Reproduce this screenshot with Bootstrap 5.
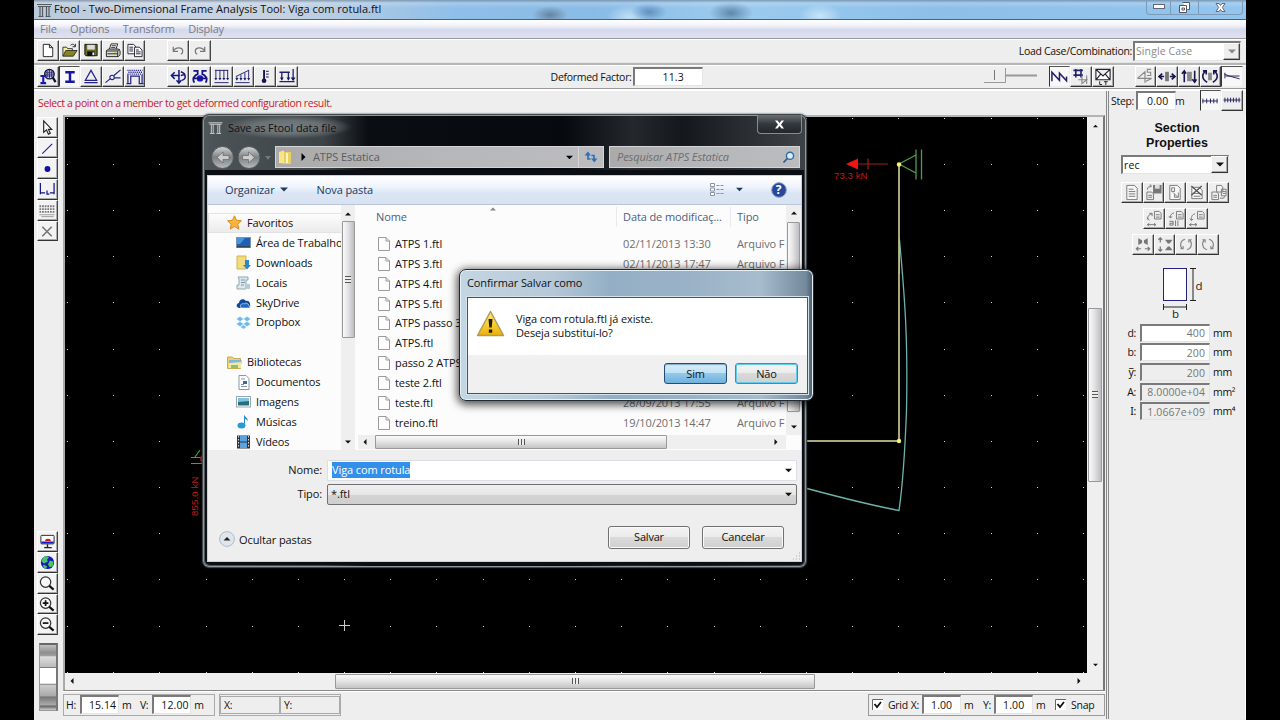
<!DOCTYPE html>
<html lang="pt-BR">
<head>
<meta charset="utf-8">
<meta name="viewport" content="width=device-width, initial-scale=1">
<title>Ftool - Two-Dimensional Frame Analysis Tool: Viga com rotula.ftl</title>
<link rel="stylesheet" href="https://cdn.jsdelivr.net/npm/bootstrap@5.3.0/dist/css/bootstrap.min.css">
<style>
*{box-sizing:border-box}
html,body{height:720px;overflow:hidden}
body{background:#000;font-family:"Open Sans","Noto Sans",sans-serif;font-size:11px;line-height:14px;color:#111}
svg{display:block;flex:none}
.app{width:1212px;height:720px;margin:0 34px;background:#eee;font-size:10.5px;letter-spacing:-.3px;white-space:nowrap}
.segoe{font-size:11px;letter-spacing:-.1px;white-space:nowrap}
.titlebar{height:19px;background:linear-gradient(90deg,#b9c9dc 0,#c9d3e2 130px,#c5d2e2 250px,#a5c6e6 350px,#8fbfe8 420px,#8abbe6 560px,#9ccbef 700px,#8dbfe9 900px,#93c5ee 1212px);padding-left:3px;position:relative}
.titlebar:after{content:"";position:absolute;inset:0;background:linear-gradient(#6c8296aa 0,#fff3 3px,#fff0 8px,#fff0 100%),radial-gradient(ellipse 18px 9px at 516px 15px,#5a6e82bb,#0000),radial-gradient(ellipse 18px 9px at 615px 12px,#4d7fb2bb,#0000),radial-gradient(ellipse 22px 12px at 697px 13px,#50789acc,#0000),radial-gradient(ellipse 22px 12px at 595px 17px,#d8effcaa,#0000),radial-gradient(ellipse 22px 12px at 786px 16px,#d8effcbb,#0000)}
.titlebar>*{z-index:1;position:relative}
.ttl{line-height:18px;margin-left:2px;letter-spacing:0}
.winbtns{width:97px;height:15px;border:1px solid #7c9bb8;border-top:0;border-radius:0 0 4px 4px;margin-right:3px}
.winbtns>div{border-right:1px solid #7c9bb8;display:flex;align-items:center;justify-content:center}
.winbtns>.wmin{width:24px}.winbtns>.wmax{width:28px}
.menubar{height:19px;border-top:1px solid #55606e;background:linear-gradient(#fff 0,#f2f3fa 30%,#d5d9ec 55%,#dfe2f2 100%);color:#7b7b82;font-size:11px;letter-spacing:-.2px;padding-left:6px;gap:13.5px}
.sunk-line{height:3px;background:linear-gradient(#9a9a9a 0 1px,#fff 1px 2px,#fff 2px)}
.sunk-line.thin{height:2px}
.groove{height:4px;background:linear-gradient(#e4e4e4 0 1px,#b5b5b5 1px 3px,#fdfdfd 3px)}
.tb{height:22px;padding-left:3px}
.tbn{width:21.7px;height:21px;background:#eee;border:1px solid;border-color:#fff #444 #333 #fff;box-shadow:inset -1px -1px #aaa;display:flex;align-items:center;justify-content:center;flex:none}
.tbn.on{background:#f8f8f8;border-color:#555 #eee #eee #333;box-shadow:none}
.fld{background:#fff;border:1px solid #e4e4e4;border-top:2px solid #7a7a7a;border-left:2px solid #7a7a7a;display:flex;align-items:center;flex:none;letter-spacing:.1px}
.fld.gray{background:#eee;color:#808080}
.undo-group{margin-left:22px}
.loadcase .case{width:108px;height:20px;margin:0 5px 0 1px;color:#8a8a8a;padding-left:1px}
.drop{width:17px;height:17px;color:#888}
.rec .drop{color:#111}
.factor{margin-left:253px}
.factor .fld{width:70px;height:19px;margin-left:1px;padding-left:28px}
.slide{margin-right:11px}
.grp2{margin-left:21px;margin-right:3px}
.statusline{height:24px}
.stepbox{width:140px;border-left:3px double #888;height:24px;padding:0 0 4px 2px}
.stepf{width:40px;height:19px;padding-left:9px;margin-left:2px}
.stepu{margin-left:-1px}
.stb{margin-right:3px}
.redmsg{color:#cb1a2c;padding-left:4px;letter-spacing:-.38px}
.mainrow{height:606px}
.lefttools{width:29px;padding:2px 0 0 3px;background:#eee;height:603px}
.lefttools .tbn{height:20.75px;width:20.6px;background:#f3f3f3}
.gap-tools{height:290px}
.wheel{width:19px;height:68px;margin:8px 0 0 2px;border:1px solid #999;border-right:2px solid #777;border-top:2px solid #666;background:linear-gradient(#c0c0c0 0,#8e8e8e 12%,#a0a0a0 17%,#ddd 18%,#bbb 34%,#555 35%,#fff 36%,#fff 59%,#777 60%,#ccc 62%,#aaa 78%,#777 80%,#aaa 92%,#666 94%,#ccc)}
.centre{width:1042px;border-left:2px solid #aaa;border-right:2px solid #777;border-bottom:2px solid #888;height:576px;border-top:2px solid #b4b4b4}
.vsb{width:16px;background:#efefef;position:relative}
.hsb{height:17px;background:#efefef}
.thumb-v{background:linear-gradient(90deg,#fafafa,#e3e3e6 45%,#bdbdc2);border:1px solid #999;border-radius:1px;display:flex;align-items:center;justify-content:center}
.thumb-h{background:linear-gradient(#fafafa,#e6e6e6 45%,#c4c4c8);border:1px solid #999;border-radius:1px;display:flex;align-items:center;justify-content:center}
.grip{width:7px;height:6px;background:repeating-linear-gradient(90deg,#555 0 1px,#eee 1px 3px)}
.grip.v{width:6px;height:7px;background:repeating-linear-gradient(#555 0 1px,#eee 1px 3px)}
.main-vsb{padding:7px 0 6px}
.main-vsb .thumb-v{width:14px;height:174px;margin-top:180px}
.main-hsb{padding:0 22px 0 5px}
.main-hsb .thumb-h{width:480px;height:15px;margin-left:261px}
.bottombar{height:26px;border-top:1px solid #fff;padding-top:1px}
.box{border:1px solid #aaa;height:22px;display:flex;align-items:center}
.bottombar .fld{width:39px;height:19px;padding-left:7px;margin-left:4px}
.bottombar .u{width:18px;padding-left:3px}
.bottombar .v{margin-left:3px}
.b1{padding-left:2px;width:152px}
.b2{width:122px;margin-left:4px}
.b2 span{border:1px solid #aaa;height:18px;width:61px;padding:1px 3px}
.b3{padding-left:3px;width:237px;border-color:#999}
.b3 .gl{margin-left:5px}.b3 .gx{margin-left:3px}.c2{margin-left:4px}
.bottombar .b3 .fld{margin-left:3px}
.bottombar .b3 .v{margin-left:4px}
.props{width:140px;border-left:3px double #888;border-right:1px solid #fff;height:604px;margin-left:auto}
.props h2{font:bold 12.5px/15px "Liberation Sans",Arial,sans-serif;text-align:center;margin:6px 0 4px;letter-spacing:0;color:#111}
.rec{width:108px;height:19px;margin-left:12px;padding-left:1px}
.r1{margin:8px 0 5px 12px}.r2{margin:0 0 5px 34px}.r3{margin:0 0 12px 23px}
.secfig{margin:0 0 2px 53px}
.prow{height:19.7px}
.prow .lb{width:31px;text-align:right;padding-right:4px}
.prow .fld{width:70px;height:18px;justify-content:end;padding-right:4px;color:#777}
.prow .u{margin-left:3px}
.barred{font-family:"Noto Sans",sans-serif}
/* save dialog */
.savedlg{position:absolute;left:202px;top:114px;width:605px;height:454px;border-radius:7px;border:1px solid #3f474b;background:linear-gradient(90deg,#50585c 0,#4a5256 16px,#3d4447 120px,#0a0d12 165px,#06090e 360px,#24282d 430px,#14181d 480px,#3d4247 600px);padding:0 4px 5px;box-shadow:inset 0 0 0 1px #8d979c,0 0 2px #222}
.shade{position:absolute;inset:55px 2px 2px 2px;background:#0b0f13;border-radius:0 0 5px 5px}
.dlgtitle{height:31px}
.dl{margin:7px 0 0 1px}
.glow{background:radial-gradient(closest-side,#777d80 0,#6a7073 55%,#0000)}
.dt{height:24px;line-height:25px;padding:0 16px 0 5px}
.dlgclose{width:45px;height:19px;margin-right:0;border:1px solid #878c91;border-top:0;border-radius:0 0 4px 4px;background:linear-gradient(#6a6f74,#33383d 50%,#23272b);display:flex;align-items:center;justify-content:center}
.navrow{margin-left:2px;height:29px}
.addr{height:22px;border:1px solid #d5d5d7;background:linear-gradient(90deg,#aaa 0,#b6b7b9 50%,#bcbcbf);color:#5b5d61}
.a1{width:329px;padding-left:2px}
.crumb{margin:0 7px 0 9px}
.refr{width:25px;height:20px;border-left:1px solid #d5d5d7;margin-left:5px;display:flex;align-items:center;justify-content:center}
.a2{width:191px;margin-left:5px;padding:0 4px 0 7px;color:#6c6d72}
.client{position:relative;height:387px;border:1px solid #c9d2da;background:#eee}
.cmdbar{height:29px;background:linear-gradient(#fff,#eef3fc 40%,#dbe6f5 60%,#d8e2f2);border-bottom:1px solid #bac5d6;color:#1e395b;padding-bottom:1px}
.c1{margin-left:17px}.c1a{margin-left:5px}.c3{margin-left:29px}.c4{margin-left:11px}.c5{margin:0 14px 0 28px}
.panes{height:245px;background:#fcfcfd}
.navp{width:135px;overflow:hidden;padding-top:8px}
.navp>div{height:19.9px;display:flex;align-items:center;gap:5px;padding-left:28px}
.navp>.top{padding-left:19px;gap:5px}
.navp>.hl{background:linear-gradient(#fdfdfd,#ebebec);border:1px solid #e3e3e4;margin-right:-1px;padding-left:18px}
.nv{width:14px;padding:7px 0 6px}
.nv .thumb-v{width:13px;height:117px;margin-top:5px}
.flist{width:446px;padding-left:3px}
.rows{width:428px;height:230px;padding-left:20px}
.rows .hdr{margin:2px 0 7px;position:relative}
.frow{height:19.9px;display:flex;align-items:center}
.frow>.n{width:245px;display:flex;align-items:center;gap:5px;overflow:hidden}
.frow>.d{width:114px;color:#6e6e6e}
.frow>.t{color:#6e6e6e;width:49px;overflow:hidden}
.hdr{color:#4c607a}
.h1x{width:245px;margin:0 2px 0 -2px;height:20px;line-height:20px}
.h2x,.h3x{height:20px;line-height:20px;margin-left:-7px;padding-left:6px;border-left:1px solid #e8eaee}
.h2x{width:121px}.h3x{width:49px}
.sortm{position:absolute;left:112px;top:0;color:#888}
.fv{width:15px;height:230px;padding:6px 0 6px}
.fv .thumb-v{width:13px;height:190px;margin-top:7px}
.fh{height:14px;width:428px;padding:0 8px 0 5px}
.fh .thumb-h{width:292px;height:14px;margin-left:8px}
.form-area{padding-top:8px;color:#111}
.fr{height:24px}
.fl{width:119px;text-align:right;padding-right:5px}
.inp{width:470px;height:21px;background:#fff;padding:0 4px;border:1px solid #dcdfe3}
.cmb{background:linear-gradient(#f0f0f0,#e6e6e6 50%,#d4d4d4 50%,#cfcfcf);border:1px solid #707070;border-radius:2px;padding-left:3px}
.sel{background:#3390ea;color:#fff;padding:1px 0}
.acts{margin-top:20px;padding:0 17px 0 11px;height:26px}
.acts .w7btn{width:82px;margin-top:-4px}.acts .canc{margin-left:12px}
.oc{margin-top:1px}
.w7btn{height:23px;border:1px solid #707070;border-radius:3px;background:linear-gradient(#f3f3f3,#ebebeb 50%,#dadada 50%,#d0d0d0);box-shadow:inset 0 0 0 1px #fafafa;display:flex;align-items:center;justify-content:center;letter-spacing:-.2px}
/* confirmation */
.confirm{position:absolute;left:459px;top:269px;width:355px;height:132px;border-radius:7px;border:1px solid #222b33;background:linear-gradient(90deg,#c4d6e2 0,#b7c9d8 90px,#94afc5 150px,#9ab2c7 230px,#a7bccd 300px,#74899c 346px,#4c5b68 353px);box-shadow:inset 0 0 0 1px #e4f1f7,0 2px 9px 2px #000a;padding:0 7px}
.confirm .hd{height:27px;line-height:26px}
.confirm .bd{width:341px;height:97px;border:1px solid #40566b;box-shadow:0 0 0 1px #d3e3ec;background:#f0f0f0}
.confirm .msg{height:57px;background:#fff;padding:9px 0 0 7px;letter-spacing:-.12px}
.msg svg{margin:3px 11px 0 1px}
.mt{padding-top:5px}
.cb{padding:8px 9px 0;gap:8px}
.confirm .w7btn{height:21px}
.confirm .sim{width:63px;border-color:#244f72;background:linear-gradient(#d7edf9,#bfe1f5 50%,#94c8ea 50%,#6fb1de);box-shadow:inset 0 1px 1px #7fa9c4}
.confirm .nao{width:63px;border-color:#2f92b8;box-shadow:inset 0 0 0 1px #62cdf0}
</style>
</head>
<body>
<svg width="0" height="0" class="position-absolute">
<defs>
<symbol id="logo" viewBox="0 0 15 14"><path d="M0 .5h15M1 2.500h13M3 3v9.500M5.500 3v9.500M9.500 3v9.500M12 3v9.500M1.500 12.500h5M8.500 12.500h5" fill="none" stroke="#555a60" stroke-width="1.200"/></symbol>
<symbol id="logow" viewBox="0 0 15 14"><path d="M0 .7h15M1 2.500h13M3 3v9.500M5 3v9.500M10 3v9.500M12 3v9.500M1.500 12.500h5M8.500 12.500h5" fill="none" stroke="#c5c5c0" stroke-width="1.100"/></symbol>
<symbol id="new" viewBox="0 0 18 18"><path d="M4 2.500h6.500l3.500 3.500v9.500H4zM10.500 2.500V6H14" fill="#fff" stroke="#222"/></symbol>
<symbol id="open" viewBox="0 0 18 18"><path d="M1.500 15V5.500h4l1 1.500h5v2" fill="#f5f0a0" stroke="#333"/><path d="M1.500 15l3-6h12l-4 6z" fill="#8a8420" stroke="#332"/><path d="M9.500 3.500c2-2 4-1 5 1M14.700 2v3h-3" fill="none" stroke="#222"/></symbol>
<symbol id="save" viewBox="0 0 18 18"><path d="M2.500 2.500h13v12h-12l-1-1z" fill="#6d6d22" stroke="#111"/><path d="M5 3h8v5H5z" fill="#ddd"/><path d="M5 10h8v5H5z" fill="#111"/><path d="M10.500 11h2v3h-2z" fill="#eee"/></symbol>
<symbol id="print" viewBox="0 0 18 18"><path d="M5 8l2-6h7l-2 6M7.500 4h4.500M7 6h4.500" fill="#fff" stroke="#222"/><path d="M2 9.500L4 7.500h11l1.500 2v4l-2 2H2zM2 9.500h12v6M14 9.500l2-2M3 12.500h11" fill="#ddd" stroke="#222"/><path d="M10 11h2" stroke="#cc0"/></symbol>
<symbol id="copy" viewBox="0 0 18 18"><path d="M1.500 2.500h6l2 2v8h-8z" fill="#fff" stroke="#223"/><path d="M3 5.500h4M3 7.500h4M3 9.500h4" stroke="#223"/><path d="M8.500 5.500h5l3 3v7h-8z" fill="#fff" stroke="#223"/><path d="M10 8.500h3M10 10.500h5M10 12.500h5" stroke="#223"/></symbol>
<symbol id="undo" viewBox="0 0 18 18"><path d="M4 5v5h5M4 10c2-5 10-5 10 0 0 1.500-1 2.500-2 3" fill="none" stroke="#777" stroke-width="1.300"/></symbol>
<symbol id="redo" viewBox="0 0 18 18"><path d="M14 5v5H9M14 10c-2-5-10-5-10 0 0 1.500 1 2.500 2 3" fill="none" stroke="#777" stroke-width="1.300"/></symbol>
<symbol id="mat" viewBox="0 0 18 18"><circle cx="10.500" cy="6.500" r="5" fill="#dde" stroke="#113" stroke-width="1.500"/><path d="M10.500 2v9M6 6.500h9M8 3v7M13 3v7M7 4.500h7M7 8.500h7" stroke="#22227a"/><path d="M14 10l3 5" stroke="#113" stroke-width="2.400"/><path d="M1 8.500h6M4 8v8M1 16h6" stroke="#1a1ab0" stroke-width="2.200"/></symbol>
<symbol id="sec" viewBox="0 0 18 18"><path d="M4 4.500h10M4 14.500h10M9 4v10" stroke="#1616a6" stroke-width="2.600"/></symbol>
<symbol id="sup" viewBox="0 0 18 18"><path d="M9 2.500L3 13h12zM2 15.500h14" fill="none" stroke="#22228a" stroke-width="1.300"/></symbol>
<symbol id="rot" viewBox="0 0 18 18"><path d="M1 15.500l5-4M10 8l7-6M10 10.500h7" stroke="#22228a" stroke-width="1.300"/><circle cx="8" cy="10" r="2.300" fill="#eef" stroke="#22228a" stroke-width="1.200"/></symbol>
<symbol id="mem" viewBox="0 0 18 18"><path d="M1.500 17V7M4.500 17V8.500h9V17M16.500 17V7M0 16.500h5M13 16.500h5" fill="none" stroke="#22228a" stroke-width="1.300"/><path d="M1 2.500h16M2 4.500h15M1 6.500h16" stroke="#22228a" stroke-width="1.500" stroke-dasharray="1.200 1"/></symbol>
<symbol id="nod" viewBox="0 0 18 18"><path d="M10 2v14M7.500 13l2.500 3 2.500-3M2 8h9M5.500 4.500L2 8l3.500 3.500M12 4c6 2 6 8 1 9M12 8l4-1" fill="none" stroke="#15157c" stroke-width="1.600"/></symbol>
<symbol id="mom" viewBox="0 0 18 18"><circle cx="9" cy="11" r="3.400" fill="#1515d0"/><path d="M1 11h16M3 15.500c-3-5 1-8 4-9.500M2 3h4.500v4.500M15 15.500c3-5-1-8-4-9.500M16 3h-4.500v4.500" fill="none" stroke="#15157c" stroke-width="1.900"/></symbol>
<symbol id="uni" viewBox="0 0 18 18"><path d="M1.500 2.500h14M2.500 2v10M6.800 2v10M11 2v10M15 2v10M1 15.500h15" stroke="#22226c"/><path d="M.8 10.500l1.700 2.500 1.700-2.500zM5.100 10.500l1.700 2.500 1.700-2.500zM9.300 10.500l1.700 2.500 1.700-2.500zM13.300 10.500l1.700 2.500 1.700-2.500z" fill="#22226c"/></symbol>
<symbol id="lin" viewBox="0 0 18 18"><path d="M1.500 9L15 2.500M2.500 9v4M6.800 7v6M11 5v8M15 2v11M1 15.500h15" stroke="#22226c"/><path d="M.8 10.500l1.700 2.500 1.700-2.500zM5.100 10.500l1.700 2.500 1.700-2.500zM9.300 10.500l1.700 2.500 1.700-2.500zM13.300 10.500l1.700 2.500 1.700-2.500z" fill="#22226c"/></symbol>
<symbol id="tmp" viewBox="0 0 18 18"><path d="M8 2v11" stroke="#15154c" stroke-width="2"/><circle cx="8" cy="13.500" r="2.500" fill="#15154c"/><path d="M10 3.500h3M10 6.500h3M10 9.500h3" stroke="#15154c"/></symbol>
<symbol id="trn" viewBox="0 0 18 18"><path d="M1 4.500h11M3.500 4v9M10.500 4v9M15.500 1v11M1 14.500h16" stroke="#22226c" stroke-width="1.400" fill="none"/><path d="M13 10l2.500 4L18 10zM1.500 10h4l-2 3zM8.500 10h4l-2 3z" fill="#15155c"/></symbol>
<symbol id="zig" viewBox="0 0 18 18"><path d="M1.500 14V4.500l8 8.500V5.500l7.500 8V9" fill="none" stroke="#22226c" stroke-width="1.600"/></symbol>
<symbol id="hdf" viewBox="0 0 18 18"><path d="M1 2.500h10M1 7.500h10M3.500 1v9M9 1v9" stroke="#22226c" stroke-width="1.700"/><path d="M6 12.500h9l-5 4V8M15 8v9" fill="none" stroke="#888" stroke-width="1.200"/></symbol>
<symbol id="mail" viewBox="0 0 18 18"><path d="M1.500 1.500h15v11h-15zM1.500 1.500L9 8.500l7.500-7M1.500 12.500l5-6M16.500 12.500l-5-6" fill="#fff" stroke="#223" stroke-width="1.200"/><path d="M5.500 14v3.500H8M10 14.500h4M12 14v4" fill="none" stroke="#222"/></symbol>
<symbol id="gs" viewBox="0 0 18 18"><path d="M1 11h15M1 11l8-7v12M10 14l6-3M15.500 1.500h-4v3h3.500V8h-4" fill="none" stroke="#888" stroke-width="1.200"/></symbol>
<symbol id="axial" viewBox="0 0 18 18"><path d="M7 4h4v10H7z" fill="#777"/><path d="M0 9h6M12 9h6M4 6L.500 9 4 12M14 6l3.500 3L14 12" fill="none" stroke="#15154c" stroke-width="1.800"/></symbol>
<symbol id="shear" viewBox="0 0 18 18"><path d="M7 4h5v10H7z" fill="#888"/><path d="M4 15V3M1.500 6L4 3l2 3M15 3v12M12.500 12l2.500 3 2-3" fill="none" stroke="#15154c" stroke-width="1.700"/></symbol>
<symbol id="bend" viewBox="0 0 18 18"><path d="M7 5h4v8H7z" fill="#888"/><path d="M6 15C0 12 0 6 5 3M1.500 3H5v4M12 15c6-3 6-9 1-12M16.500 3H13v4" fill="none" stroke="#15154c" stroke-width="1.700"/></symbol>
<symbol id="defl" viewBox="0 0 18 18"><path d="M1 6.500l5 2 11 3M2 8.500h15" fill="none" stroke="#22225c"/><path d="M1.500 5v6" stroke="#22225c"/></symbol>
<symbol id="st1" viewBox="0 0 18 18"><path d="M1 9.500h16M1.500 7v5M5.500 7v5M9.500 7v5M13 7v5M16.500 7v5" stroke="#22225c"/></symbol>
<symbol id="st2" viewBox="0 0 18 18"><path d="M0 8.500h18M1.500 6v5M4.500 6v5M7.500 6v5M10.500 6v5M13.500 6v5M16.500 6v5" stroke="#22225c"/></symbol>
<symbol id="arrow" viewBox="0 0 18 18"><path d="M5.500 2v12l3-2.500 2 4.500 2-1-2-4h3.500z" fill="#fff" stroke="#222" stroke-width="1.200"/></symbol>
<symbol id="line" viewBox="0 0 18 18"><path d="M4 14.500L14.500 4" stroke="#22228a" stroke-width="1.200"/></symbol>
<symbol id="dot" viewBox="0 0 18 18"><circle cx="9.500" cy="9.500" r="3.100" fill="#1010a8"/></symbol>
<symbol id="dim" viewBox="0 0 18 18"><path d="M2 2v12M16.500 2v12M2 12.500h5M12 12.500h5M9 10v4h2.500" fill="none" stroke="#15158c" stroke-width="1.300"/></symbol>
<symbol id="kbd" viewBox="0 0 18 18"><path d="M1 4.500h16M1 7.500h16M1 10.500h16" stroke="#777" stroke-width="2" stroke-dasharray="1.800 1"/><path d="M1 13.500h16M3 15.500h13" stroke="#999"/></symbol>
<symbol id="del" viewBox="0 0 18 18"><path d="M4 4l10 10M14 4L4 14" stroke="#777" stroke-width="1.700"/></symbol>
<symbol id="mon" viewBox="0 0 18 18"><rect x="2.500" y="2.500" width="14" height="9" rx="1" fill="#fff" stroke="#222"/><path d="M3 9h13v2H3z" fill="#1616c8"/><path d="M7 8.500a3 2.500 0 0 1 6 0z" fill="#d01818"/><path d="M9.500 12v3M6 15.500h8" stroke="#222" stroke-width="1.500"/></symbol>
<symbol id="glb" viewBox="0 0 18 18"><circle cx="9.500" cy="9" r="7" fill="#1818b8"/><path d="M5 3.500c3-2 5-1 6 0L9 6l1 2-4 2-3-2zM12 7l4 1-1 5-3 1-2-3zM5 11l4 2-1 3-3-2z" fill="#46c860"/></symbol>
<symbol id="z0" viewBox="0 0 18 18"><circle cx="7.500" cy="7.500" r="5.500" fill="#f8f8f8" stroke="#333" stroke-width="1.300"/><path d="M11.500 11.500l4.500 4" stroke="#111" stroke-width="2.200"/></symbol>
<symbol id="zp" viewBox="0 0 18 18"><use href="#z0"/><path d="M4.500 7.500h6M7.500 4.500v6" stroke="#111" stroke-width="1.800"/></symbol>
<symbol id="zm" viewBox="0 0 18 18"><use href="#z0"/><path d="M4.500 7.500h6" stroke="#111" stroke-width="1.800"/></symbol>
<symbol id="pg" viewBox="0 0 18 18"><path d="M3.500 1.500h8l3 3v12h-11zM5.500 5.500h5M5.500 8h7M5.500 10.500h7M5.500 13h7" fill="#f7f7f7" stroke="#777"/></symbol>
<symbol id="pgs" viewBox="0 0 18 18"><path d="M1.500 8.500h5l2 2v6h-7zM3 12h4M3 14h4M2 6c0-3 2-4 4-4M4.500.500L6.500 2 4.500 4" fill="none" stroke="#777"/><path d="M8 1h9v9H8z" fill="#777"/><path d="M10 1h5v4h-5z" fill="#ddd"/></symbol>
<symbol id="pgr" viewBox="0 0 18 18"><path d="M3.500 1.500h8l3 3v12h-11z" fill="#f7f7f7" stroke="#777"/><path d="M5.500 4h3v4h-3zM7 9l5 5M12.500 9v5h-4v-3" fill="none" stroke="#777"/></symbol>
<symbol id="pgx" viewBox="0 0 18 18"><path d="M3.500 3.500h8l3 3v9h-11zM5.500 10h7M5.500 13h7" fill="#f7f7f7" stroke="#777"/><path d="M3 2l11 10M14 2L3 12" stroke="#555" stroke-width="1.400"/></symbol>
<symbol id="pg2" viewBox="0 0 18 18"><path d="M1.500 8.500h5l2 2v6h-7zM3 12h4M3 14h4M6.500 1.500h5l1.500 2v5h-6.500zM11.500 5.500h5v7h-5zM13 8h3M13 10h3M10 15h4l1-2" fill="#f3f3f3" stroke="#777"/></symbol>
<symbol id="ap1" viewBox="0 0 18 18"><path d="M9.500 1.500h5l2 2v6h-7zM11 5h4M11 7.500h4M2 10c0-4 2-5 5-6M4 3.500h3v3M2 15.500h9M4 14l-2 1.500L4 17M9 14l2 1.500L9 17M2 8l2 3" fill="none" stroke="#777"/></symbol>
<symbol id="ap2" viewBox="0 0 18 18"><path d="M9.500 1.500h5l2 2v6h-7zM11 5h4M11 7.500h4M3 8c0-3 1-4 4-5M1.500 6.500L3 8.500l2-1.500M2 12h4v4H2.500v-2H6M8.500 11v6M11 11v6" fill="none" stroke="#777"/></symbol>
<symbol id="ap3" viewBox="0 0 18 18"><path d="M9.500 1.500h5l2 2v6h-7zM11 5h4M11 7.500h4M3 11c0-5 1-6 4-7M1.500 9L3 11l2-1.500M1 15.500h8M3 14l-2 1.500L3 17M7 14l2 1.500L7 17" fill="none" stroke="#777"/></symbol>
<symbol id="mh" viewBox="0 0 18 18"><path d="M4 2.500l4 2v3L4 9.500zM14 2.500l-4 2v3l4 2z" fill="#777"/><path d="M2 13.500h5M11 13.500h5M4 11.500l-2 2 2 2M14 11.500l2 2-2 2" fill="none" stroke="#777" stroke-width="1.300"/></symbol>
<symbol id="mv" viewBox="0 0 18 18"><path d="M9 4h8l-3 4h-2zM9 15h8l-3-4h-2z" fill="#777"/><path d="M4 7V2M4 11v5M2 4l2-2 2 2M2 14l2 2 2-2" fill="none" stroke="#777" stroke-width="1.300"/></symbol>
<symbol id="rl" viewBox="0 0 18 18"><path d="M8 3.500c-5 1-6 7-3 10M3 13.500h3v-3M10 14.500c5-1 6-7 3-10M15 4h-3v3" fill="none" stroke="#888" stroke-width="1.200"/></symbol>
<symbol id="rr" viewBox="0 0 18 18"><path d="M10 3.500c5 1 6 7 3 10M15 13.500h-3v-3M8 14.500c-5-1-6-7-3-10M3 4h3v3" fill="none" stroke="#888" stroke-width="1.200"/></symbol>
<symbol id="file" viewBox="0 0 12 14"><path d="M.5.500h7.500l3.500 3.500v9.500H.500zM8 .500V4h3.500" fill="#fdfdfd" stroke="#9a9a9a"/></symbol>
<symbol id="dn" viewBox="0 0 8 5"><path d="M0 .500h8L4 4.500z" fill="currentColor"/></symbol>
<symbol id="up" viewBox="0 0 8 5"><path d="M0 4.500h8L4 .500z" fill="currentColor"/></symbol>
<symbol id="lf" viewBox="0 0 5 8"><path d="M4.500 0v8L.500 4z" fill="currentColor"/></symbol>
<symbol id="rt" viewBox="0 0 5 8"><path d="M.500 0v8l4-4z" fill="currentColor"/></symbol>
<symbol id="chk" viewBox="0 0 11 11"><path d="M0 0h11v11H0z" fill="#fff"/><path d="M.5 11V.500H11" fill="none" stroke="#666"/><path d="M2.500 5l2.500 3 4-5" fill="none" stroke="#111" stroke-width="1.800"/></symbol>
</defs>
</svg>

<div class="app d-flex flex-column">
  <header class="titlebar d-flex align-items-start segoe">
    <svg width="15" height="14" class="mt-1"><use href="#logo"/></svg>
    <span class="ttl">Ftool - Two-Dimensional Frame Analysis Tool: Viga com rotula.ftl</span>
    <div class="winbtns d-flex ms-auto">
      <div class="wmin"><svg width="12" height="6"><rect x=".5" y=".5" width="11" height="4" fill="#fff" stroke="#667"/></svg></div>
      <div class="wmax"><svg width="11" height="11"><path d="M3.500.500h7v7h-2M.500 3.500h7v7h-7zM3 6h2.500v2H3z" fill="#fff" stroke="#556"/></svg></div>
      <div class="flex-fill border-0"><svg width="11" height="9"><path d="M1 .500h3l1.500 2 1.500-2h3L7.300 4.500l2.700 4H7L5.500 6.500 4 8.500H1l2.700-4z" fill="#fff" stroke="#667"/></svg></div>
    </div>
  </header>
  <nav class="menubar d-flex align-items-center"><span>File</span><span>Options</span><span>Transform</span><span>Display</span></nav>
  <div class="sunk-line thin"></div>

  <div class="tb d-flex">
    <div class="d-flex">
      <div class="tbn"><svg width="18" height="17"><use href="#new"/></svg></div><div class="tbn"><svg width="18" height="17"><use href="#open"/></svg></div><div class="tbn"><svg width="18" height="17"><use href="#save"/></svg></div><div class="tbn"><svg width="18" height="17"><use href="#print"/></svg></div><div class="tbn"><svg width="18" height="17"><use href="#copy"/></svg></div>
    </div>
    <div class="d-flex undo-group">
      <div class="tbn"><svg width="18" height="17"><use href="#undo"/></svg></div><div class="tbn"><svg width="18" height="17"><use href="#redo"/></svg></div>
    </div>
    <div class="d-flex align-items-center ms-auto loadcase">
      <span>Load Case/Combination:</span>
      <div class="fld case"><span class="flex-fill">Single Case</span><div class="tbn drop"><svg width="8" height="5"><use href="#dn"/></svg></div></div>
    </div>
  </div>
  <div class="groove"></div>

  <div class="tb d-flex">
    <div class="d-flex">
      <div class="tbn"><svg width="18" height="17"><use href="#mat"/></svg></div><div class="tbn on"><svg width="18" height="17"><use href="#sec"/></svg></div><div class="tbn"><svg width="18" height="17"><use href="#sup"/></svg></div><div class="tbn"><svg width="18" height="17"><use href="#rot"/></svg></div><div class="tbn"><svg width="18" height="17"><use href="#mem"/></svg></div>
    </div>
    <div class="d-flex undo-group">
      <div class="tbn"><svg width="18" height="17"><use href="#nod"/></svg></div><div class="tbn"><svg width="18" height="17"><use href="#mom"/></svg></div><div class="tbn"><svg width="18" height="17"><use href="#uni"/></svg></div><div class="tbn"><svg width="18" height="17"><use href="#lin"/></svg></div><div class="tbn"><svg width="18" height="17"><use href="#tmp"/></svg></div><div class="tbn"><svg width="18" height="17"><use href="#trn"/></svg></div>
    </div>
    <div class="d-flex align-items-center factor"><span>Deformed Factor:</span><div class="fld"><span>11.3</span></div></div>
    <div class="d-flex ms-auto rightset">
      <svg width="54" height="20" class="slide"><path d="M22 9.500h31" stroke="#999" stroke-width="2"/><path d="M0 2h21v14H0z" fill="#eee"/><path d="M0 16.500h21.500V2" fill="none" stroke="#999"/><path d="M10.500 4v10" stroke="#777"/></svg>
      <div class="d-flex grp1"><div class="tbn on"><svg width="18" height="17"><use href="#zig"/></svg></div><div class="tbn"><svg width="18" height="17"><use href="#hdf"/></svg></div><div class="tbn"><svg width="18" height="17"><use href="#mail"/></svg></div></div>
      <div class="d-flex grp2"><div class="tbn"><svg width="18" height="17"><use href="#gs"/></svg></div><div class="tbn"><svg width="18" height="17"><use href="#axial"/></svg></div><div class="tbn"><svg width="18" height="17"><use href="#shear"/></svg></div><div class="tbn"><svg width="18" height="17"><use href="#bend"/></svg></div><div class="tbn on"><svg width="18" height="17"><use href="#defl"/></svg></div></div>
    </div>
  </div>
  <div class="sunk-line"></div>

  <div class="statusline d-flex">
    <div class="redmsg d-flex align-items-center flex-fill">Select a point on a member to get deformed configuration result.</div>
    <div class="stepbox d-flex align-items-center"><span>Step:</span><div class="fld stepf"><span>0.00</span></div><span class="stepu">m</span>
      <div class="d-flex ms-auto stb"><div class="tbn on"><svg width="18" height="17"><use href="#st1"/></svg></div><div class="tbn"><svg width="18" height="17"><use href="#st2"/></svg></div></div></div>
  </div>

  <div class="d-flex mainrow">
    <aside class="lefttools d-flex flex-column">
      <div class="tbn"><svg width="18" height="17"><use href="#arrow"/></svg></div><div class="tbn"><svg width="18" height="17"><use href="#line"/></svg></div><div class="tbn"><svg width="18" height="17"><use href="#dot"/></svg></div><div class="tbn"><svg width="18" height="17"><use href="#dim"/></svg></div><div class="tbn"><svg width="18" height="17"><use href="#kbd"/></svg></div><div class="tbn"><svg width="18" height="17"><use href="#del"/></svg></div>
      <div class="gap-tools"></div>
      <div class="tbn"><svg width="18" height="17"><use href="#mon"/></svg></div><div class="tbn"><svg width="18" height="17"><use href="#glb"/></svg></div><div class="tbn"><svg width="18" height="17"><use href="#z0"/></svg></div><div class="tbn"><svg width="18" height="17"><use href="#zp"/></svg></div><div class="tbn"><svg width="18" height="17"><use href="#zm"/></svg></div>
      <div class="wheel"></div>
    </aside>
    <div>
      <div class="centre">
        <div class="d-flex">
          <svg id="model" width="1022" height="556" viewBox="65 117 1022 556">
            <rect x="65" y="117" width="1022" height="556" fill="#000"/>
            <g id="grid" fill="#d8d8d8"></g>
            <path d="M807 441H899V164" fill="none" stroke="#a8a878" stroke-width="2"/>
            <path d="M899.500 240C905 300 908 340 906.500 410C905 450 902 490 899 510.500C870 505 835 496 807 488.500" fill="none" stroke="#6fb3a8" stroke-width="1.300"/>
            <path d="M899.500 238v35" stroke="#8fc7b4"/>
            <path d="M899 164l17-9v18zM916 149.500v30M921.500 149.500v30" fill="none" stroke="#4f9a4f" stroke-width="1.300"/>
            <circle cx="899" cy="164.500" r="2.200" fill="#f4f47a"/><circle cx="899" cy="441" r="2.200" fill="#f4f47a"/>
            <path d="M856 164h32M868 158.500v11" stroke="#a81a1a" stroke-width="1.200"/><path d="M846 164l12-5.500v11z" fill="#f01414"/>
            <text x="834" y="179" font-family="Liberation Sans" font-size="9.500" fill="#c41a1a" letter-spacing=".1">73.3 kN</text>
            <text transform="translate(198 516) rotate(-90)" font-family="Liberation Sans" font-size="9.500" fill="#c41a1a" letter-spacing=".2">855.0 kN</text>
            <path d="M191 457.500h13M191 463.500h13M195 457l5-7" stroke="#4f9a4f" stroke-width="1.200"/><circle cx="205" cy="459" r="5" fill="#a01818"/>
            <path d="M344.500 620v11M339 625.500h11" stroke="#ccc"/>
          </svg>
          <div class="vsb d-flex flex-column align-items-center main-vsb">
            <svg width="5" height="4"><use href="#up"/></svg>
            <div class="thumb-v"><div class="grip v"></div></div>
            <svg width="5" height="4" class="mt-auto"><use href="#dn"/></svg>
          </div>
        </div>
        <div class="hsb d-flex align-items-center main-hsb">
          <svg width="4" height="6"><use href="#lf"/></svg>
          <div class="thumb-h"><div class="grip"></div></div>
          <svg width="4" height="6" class="ms-auto"><use href="#rt"/></svg>
        </div>
      </div>
      <div class="bottombar d-flex align-items-center">
        <div class="box b1"><span>H:</span><div class="fld"><span>15.14</span></div><span class="u">m</span><span class="v">V:</span><div class="fld"><span>12.00</span></div><span class="u">m</span></div>
        <div class="box b2"><span>X:</span><span>Y:</span></div>
        <div class="box b3 ms-auto"><svg width="11" height="11"><use href="#chk"/></svg><span class="gl">Grid</span><span class="gx">X:</span><div class="fld"><span>1.00</span></div><span class="u">m</span><span class="v">Y:</span><div class="fld"><span>1.00</span></div><span class="u">m</span><svg width="11" height="11" class="c2"><use href="#chk"/></svg><span class="gl">Snap</span></div>
      </div>
    </div>
    <aside class="props">
      <h2>Section<br>Properties</h2>
      <div class="fld rec"><span class="flex-fill">rec</span><div class="tbn drop"><svg width="8" height="5"><use href="#dn"/></svg></div></div>
      <div class="d-flex r1"><div class="tbn"><svg width="18" height="17"><use href="#pg"/></svg></div><div class="tbn"><svg width="18" height="17"><use href="#pgs"/></svg></div><div class="tbn"><svg width="18" height="17"><use href="#pgr"/></svg></div><div class="tbn"><svg width="18" height="17"><use href="#pgx"/></svg></div><div class="tbn"><svg width="18" height="17"><use href="#pg2"/></svg></div></div>
      <div class="d-flex r2"><div class="tbn"><svg width="18" height="17"><use href="#ap1"/></svg></div><div class="tbn"><svg width="18" height="17"><use href="#ap2"/></svg></div><div class="tbn"><svg width="18" height="17"><use href="#ap3"/></svg></div></div>
      <div class="d-flex r3"><div class="tbn"><svg width="18" height="17"><use href="#mh"/></svg></div><div class="tbn"><svg width="18" height="17"><use href="#mv"/></svg></div><div class="tbn"><svg width="18" height="17"><use href="#rl"/></svg></div><div class="tbn"><svg width="18" height="17"><use href="#rr"/></svg></div></div>
      <svg width="50" height="54" class="secfig"><rect x="1.500" y="1.500" width="23" height="32" fill="#fff" stroke="#22227c"/><path d="M28 1.500h6M31 1.500v32M28 33.500h6M1.500 37v6M1.500 40h23M24.500 37v6" fill="none" stroke="#222"/><text x="33.500" y="23" font-family="Open Sans" font-size="11.500" fill="#222">d</text><text x="10" y="51" font-family="Open Sans" font-size="11.500" fill="#222">b</text></svg>
      <div class="prow d-flex align-items-center"><span class="lb">d:</span><div class="fld">400</div><span class="u">mm</span></div>
      <div class="prow d-flex align-items-center"><span class="lb">b:</span><div class="fld">200</div><span class="u">mm</span></div>
      <div class="prow d-flex align-items-center"><span class="lb">y̅:</span><div class="fld gray">200</div><span class="u">mm</span></div>
      <div class="prow d-flex align-items-center"><span class="lb">A:</span><div class="fld gray">8.0000e+04</div><span class="u">mm²</span></div>
      <div class="prow d-flex align-items-center"><span class="lb barred">I:</span><div class="fld gray">1.0667e+09</div><span class="u">mm⁴</span></div>
    </aside>
  </div>
</div>

<section class="savedlg segoe">
  <div class="shade"></div>
  <div class="position-relative">
    <div class="d-flex dlgtitle">
      <svg width="15" height="13" class="dl"><use href="#logow"/></svg>
      <span class="glow dt">Save as Ftool data file</span>
      <div class="dlgclose ms-auto"><svg width="11" height="9"><path d="M1 .500h2.500L5.500 3l2-2.500H10L7 4.500l3 4H7.500l-2-2.500-2 2.500H1l3-4z" fill="#fff"/></svg></div>
    </div>
    <div class="d-flex navrow">
      <svg width="66" height="24" viewBox="210 146 66 24"><defs><linearGradient id="gb" x2="0" y2="1"><stop stop-color="#d2d5d6"/><stop offset=".5" stop-color="#7c8183"/><stop offset="1" stop-color="#b9bcbd"/></linearGradient></defs><circle cx="223.500" cy="157.500" r="11" fill="url(#gb)" stroke="#50565a"/><circle cx="250" cy="157.500" r="11" fill="url(#gb)" stroke="#50565a"/><path d="M224 152l-6 5.500 6 5.500v-3.500h6v-4h-6zM249.500 152l6 5.500-6 5.500v-3.500h-6v-4h6z" fill="#ccc" stroke="#666" stroke-width=".7"/><path d="M266 156h6l-3 4z" fill="#777"/></svg>
      <div class="addr d-flex align-items-center a1">
        <svg width="14" height="15"><path d="M1 2l5-1.500v13L1 13z" fill="#f6e58b"/><path d="M6 2h7v12H6z" fill="#e9cf62"/><path d="M8 3h2v10H8z" fill="#fbf3bf"/></svg>
        <svg width="5" height="8" class="text-black crumb"><use href="#rt"/></svg><span>ATPS Estatica</span>
        <svg width="7" height="5" class="ms-auto text-black"><use href="#dn"/></svg>
        <div class="refr"><svg width="14" height="12"><path d="M6.500 8H4V3" fill="none" stroke="#2b72b5" stroke-width="1.700"/><path d="M.500 4.500L4 .500l3 4z" fill="#2b72b5"/><path d="M7.500 4.500H10v4" fill="none" stroke="#2b72b5" stroke-width="1.700"/><path d="M7 7.500l3.200 4 3.300-4z" fill="#2b72b5"/></svg></div>
      </div>
      <div class="addr d-flex align-items-center a2"><i>Pesquisar ATPS Estatica</i><svg width="13" height="13" class="ms-auto"><circle cx="8" cy="4.800" r="3.600" fill="#dfeaf3" stroke="#2c6da3" stroke-width="1.400"/><path d="M5.300 7.500L1.500 11.500" stroke="#2c5d8a" stroke-width="1.800"/></svg></div>
    </div>
    <div class="client">
      <div class="cmdbar d-flex align-items-center"><span class="c1">Organizar</span><svg width="8" height="5" class="c1a"><use href="#dn"/></svg><span class="c3">Nova pasta</span>
        <svg width="15" height="13" class="ms-auto"><path d="M.5.500h4v3h-4zM.500 5h4v3h-4zM.500 9.500h4v3h-4z" fill="#fff" stroke="#8b93a5"/><path d="M6.500 2.500h8M6.500 6.500h8M6.500 10.500h8" stroke="#8b93a5" stroke-dasharray="3 1"/></svg>
        <svg width="7" height="5" class="c4"><use href="#dn"/></svg>
        <svg width="16" height="16" class="c5"><circle cx="8" cy="8" r="7.300" fill="#2647a0" stroke="#8a98b5"/><text x="4.800" y="12.200" font-size="12" font-weight="700" fill="#fff" font-family="Open Sans">?</text></svg>
      </div>
      <div class="panes d-flex">
        <div class="navp">
          <div class="top hl"><svg width="15" height="15"><path d="M7.500.800l2 4.500 5 .5-3.700 3.300 1 5L7.500 11.500l-4.300 2.600 1-5L.500 5.800l5-.5z" fill="#fbb53a" stroke="#d98a1c"/></svg>Favoritos</div>
          <div><svg width="15" height="12"><rect x=".5" y=".5" width="14" height="10" fill="#1f5fb4" stroke="#7892b4"/><path d="M1 1h8l-5 6H1z" fill="#4a92dc"/><path d="M1 9h13v1.500H1z" fill="#345"/></svg>Área de Trabalho</div>
          <div><svg width="15" height="15"><path d="M1 1h9v13H1z" fill="#f2dc80" stroke="#d1b251"/><path d="M9 5h4v5h2l-4 4.500L7 10h2z" fill="#2f84d2"/></svg>Downloads</div>
          <div><svg width="15" height="14"><path d="M2 1h10v3H10v9H1V9h2V3z" fill="#dbe9ee" stroke="#8fa7b1"/><path d="M5 4h4M5 6.500h4M5 9h3" stroke="#7b97a4"/><path d="M9 8h5v5H9z" fill="#b6cdd6"/></svg>Locais</div>
          <div><svg width="15" height="12"><path d="M1 10C0 7 2 6 3 6c0-4 5-5 7-2 3-1 5 2 4 7H3z" fill="#12499c"/><path d="M5 11c-2-4 2-5 3-4 2-2 5 0 4 1 2 0 2 3 1 3z" fill="#1c66c4" stroke="#fff" stroke-width=".6"/></svg>SkyDrive</div>
          <div><svg width="15" height="13"><path d="M4 .500L7.500 3 4 5.500.500 3zM11 .500L14.500 3 11 5.500 7.500 3zM4 5.500L7.500 8 4 10.500.500 8zM11 5.500L14.500 8 11 10.500 7.500 8zM7.500 9l3 2-3 2-3-2z" fill="#6db8ea" stroke="#cfe8f8" stroke-width=".5"/></svg>Dropbox</div>
          <div></div>
          <div class="top"><svg width="15" height="14"><path d="M.500 2h5l1 1.500h7v10H.500z" fill="#ecd271" stroke="#c9ad4e"/><path d="M2 5h12.500v4H2z" fill="#7cb7e0"/><path d="M2 8l12-1v6H2z" fill="#f4e7a6"/><path d="M4 10h7v3H4z" fill="#87c07a"/></svg>Bibliotecas</div>
          <div><svg width="15" height="15"><path d="M3 .500h7l3 3v11H3z" fill="#fff" stroke="#8c98a4"/><path d="M5 4h4M5 11.500h6M5 9.500h3" stroke="#7b98b8"/><path d="M7 6h4v3H7z" fill="#3d6b9b"/></svg>Documentos</div>
          <div><svg width="15" height="12"><rect x=".5" y=".5" width="14" height="10.500" fill="#fff" stroke="#9aa6b0"/><path d="M2 2h11v3l-5 1-6 1z" fill="#7fc4e8"/><path d="M2 6l11-1v4.500H2z" fill="#266f77"/></svg>Imagens</div>
          <div><svg width="15" height="15"><path d="M8 11V.500c1 3 4.500 3 3.500 7-.5-2-2-2.500-2.500-2.500v6.500" fill="#2a8ccc"/><ellipse cx="5.500" cy="11.500" rx="4" ry="3" fill="#2a9ad6"/></svg>Músicas</div>
          <div><svg width="15" height="14"><path d="M1 .500h13v13H1z" fill="#333"/><path d="M4 1h7v5.500H4zM4 7.500h7V13H4z" fill="#5aa3e0"/><path d="M2.500 1v12M12.500 1v12" stroke="#ddd" stroke-dasharray="1.500 1.500"/></svg>Vídeos</div>
        </div>
        <div class="vsb nv d-flex flex-column align-items-center"><svg width="6" height="4"><use href="#up"/></svg><div class="thumb-v"><div class="grip v"></div></div><svg width="6" height="4" class="mt-auto"><use href="#dn"/></svg></div>
        <div class="flist">
          <div class="d-flex">
            <div class="rows">
              <div class="frow hdr"><span class="h1x">Nome</span><span class="h2x">Data de modificaç...</span><span class="h3x">Tipo</span><svg width="6" height="4" class="sortm"><use href="#up"/></svg></div>
              <div class="frow"><span class="n"><svg width="12" height="14"><use href="#file"/></svg>ATPS 1.ftl</span><span class="d">02/11/2013 13:30</span><span class="t">Arquivo F</span></div>
              <div class="frow"><span class="n"><svg width="12" height="14"><use href="#file"/></svg>ATPS 3.ftl</span><span class="d">02/11/2013 17:47</span><span class="t">Arquivo F</span></div>
              <div class="frow"><span class="n"><svg width="12" height="14"><use href="#file"/></svg>ATPS 4.ftl</span></div>
              <div class="frow"><span class="n"><svg width="12" height="14"><use href="#file"/></svg>ATPS 5.ftl</span></div>
              <div class="frow"><span class="n"><svg width="12" height="14"><use href="#file"/></svg>ATPS passo 3</span></div>
              <div class="frow"><span class="n"><svg width="12" height="14"><use href="#file"/></svg>ATPS.ftl</span></div>
              <div class="frow"><span class="n"><svg width="12" height="14"><use href="#file"/></svg>passo 2 ATPS</span></div>
              <div class="frow"><span class="n"><svg width="12" height="14"><use href="#file"/></svg>teste 2.ftl</span></div>
              <div class="frow"><span class="n"><svg width="12" height="14"><use href="#file"/></svg>teste.ftl</span><span class="d">28/09/2013 17:55</span><span class="t">Arquivo F</span></div>
              <div class="frow"><span class="n"><svg width="12" height="14"><use href="#file"/></svg>treino.ftl</span><span class="d">19/10/2013 14:47</span><span class="t">Arquivo F</span></div>
            </div>
            <div class="vsb fv d-flex flex-column align-items-center"><svg width="6" height="4"><use href="#up"/></svg><div class="thumb-v"></div><svg width="6" height="4" class="mt-auto"><use href="#dn"/></svg></div>
          </div>
          <div class="hsb fh d-flex align-items-center"><svg width="4" height="6"><use href="#lf"/></svg><div class="thumb-h"><div class="grip"></div></div><svg width="4" height="6" class="ms-auto"><use href="#rt"/></svg></div>
        </div>
      </div>
      <div class="form-area">
        <div class="d-flex align-items-center fr"><span class="fl">Nome:</span><div class="inp d-flex align-items-center"><span class="sel">Viga com rotula</span><svg width="7" height="5" class="ms-auto"><use href="#dn"/></svg></div></div>
        <div class="d-flex align-items-center fr"><span class="fl">Tipo:</span><div class="inp cmb d-flex align-items-center"><span>*.ftl</span><svg width="7" height="5" class="ms-auto"><use href="#dn"/></svg></div></div>
        <div class="d-flex align-items-center acts">
          <svg width="16" height="16"><circle cx="8" cy="8" r="7.400" fill="#dfe6ee" stroke="#b0bac4"/><path d="M4.500 9.500L8 6l3.500 3.500z" fill="#222"/></svg><span class="ms-1 oc">Ocultar pastas</span>
          <div class="w7btn ms-auto">Salvar</div><div class="w7btn canc">Cancelar</div>
        </div>
      </div>
      <svg width="9" height="9" class="position-absolute bottom-0 end-0"><path d="M7 1h1M4 4h1M7 4h1M1 7h1M4 7h1M7 7h1" stroke="#aaa"/></svg>
    </div>
  </div>
</section>

<section class="confirm segoe">
  <div class="hd">Confirmar Salvar como</div>
  <div class="bd">
    <div class="msg d-flex"><svg width="29" height="27"><defs><linearGradient id="wg" x2="0" y2="1"><stop stop-color="#ffef7a"/><stop offset="1" stop-color="#eeb000"/></linearGradient></defs><path d="M14.500 1.500l13 24h-26z" fill="url(#wg)" stroke="#b09a58" stroke-width="1.500" stroke-linejoin="round"/><path d="M12.500 9h4l-.8 8.500h-2.400zM12.800 19.500h3.400v3.200h-3.400z" fill="#221d08"/></svg><div class="mt">Viga com rotula.ftl já existe.<br>Deseja substituí-lo?</div></div>
    <div class="d-flex justify-content-end cb"><div class="w7btn sim">Sim</div><div class="w7btn nao">Não</div></div>
  </div>
</section>
<script src="https://cdn.jsdelivr.net/npm/bootstrap@5.3.0/dist/js/bootstrap.bundle.min.js"></script>
<script>
// one-metre snap grid of the model view
const grid=document.getElementById('grid'),step=46.18;
for(let r=0;r<13;r++)for(let c=0;c<23;c++){
  const p=document.createElementNS('http://www.w3.org/2000/svg','rect');
  p.setAttribute('x',Math.round(67+c*step));p.setAttribute('y',Math.round(117.600+r*step));
  p.setAttribute('width',1);p.setAttribute('height',1);grid.appendChild(p);
}
</script>
</body>
</html>
